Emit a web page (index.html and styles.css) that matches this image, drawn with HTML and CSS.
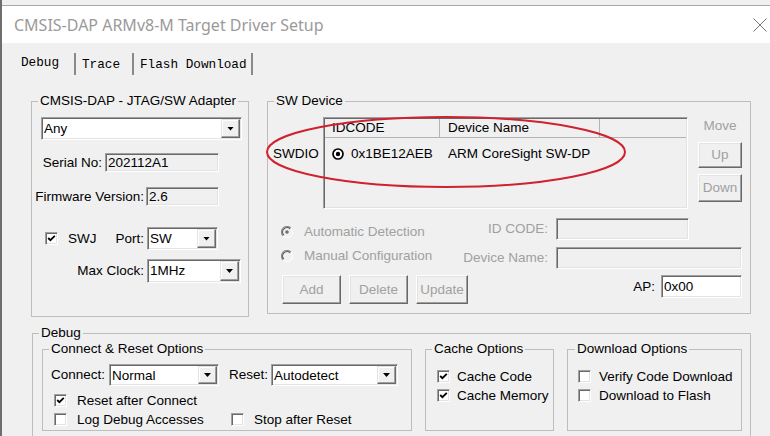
FILE: index.html
```html
<!DOCTYPE html>
<html>
<head>
<meta charset="utf-8">
<title>CMSIS-DAP ARMv8-M Target Driver Setup</title>
<link rel="stylesheet" href="styles.css">
</head>
<body>
<div class="window">
  <div class="topstrip"></div>
  <div class="titlebar">
    <span class="title">CMSIS-DAP ARMv8-M Target Driver Setup</span>
    <svg class="close" viewBox="0 0 14 14"><path d="M0.5 0.5L13.5 13.5M13.5 0.5L0.5 13.5"/></svg>
  </div>
  <div class="tabs">
    <div class="tab t1 sel">Debug</div>
    <div class="tab t2">Trace</div>
    <div class="tab t3">Flash Download</div>
  </div>
  <div class="row1">
    <fieldset class="group g-adapter">
      <legend>CMSIS-DAP - JTAG/SW Adapter</legend>
      <div class="adapter">
        <div class="combo sunk c-any"><span class="val">Any</span><span class="drop"></span></div>
        <div class="frow r-serial"><span class="lbl l-serial">Serial No:</span><span class="field sunk ro f-serial">202112A1</span></div>
        <div class="frow r-fw"><span class="lbl l-fw">Firmware Version:</span><span class="field sunk ro f-fw">2.6</span></div>
        <div class="frow r-swj">
          <span class="swjcell"><span class="cb sunk"><svg viewBox="0 0 9 9"><polyline points="1.2,4 3.4,6.2 7.8,1.8"/></svg></span><span class="swj">SWJ</span><span class="port">Port:</span></span>
          <div class="combo sunk c-port"><span class="val">SW</span><span class="drop"></span></div>
        </div>
        <div class="frow r-clk"><span class="lbl l-clk">Max Clock:</span><div class="combo sunk c-clk"><span class="val">1MHz</span><span class="drop"></span></div></div>
      </div>
    </fieldset>
    <fieldset class="group g-swdev">
      <legend>SW Device</legend>
      <div class="swdev">
        <div class="rowa">
          <span class="swdio">SWDIO</span>
          <div class="list sunk">
            <div class="lhead"><span class="hc hc1">IDCODE</span><span class="hc hc2">Device Name</span><span class="hc hc3"></span></div>
            <div class="lrow">
              <span class="lc1"><svg class="rsel" viewBox="0 0 12 12"><circle cx="6" cy="6" r="5" class="ring"/><circle cx="6" cy="6" r="2.2" class="dot"/></svg>0x1BE12AEB</span>
              <span class="lc2">ARM CoreSight SW-DP</span>
            </div>
          </div>
          <div class="move">
            <div class="movelbl">Move</div>
            <div class="btn dis b-up">Up</div>
            <div class="btn dis b-down">Down</div>
          </div>
        </div>
        <div class="rowb">
          <div class="radios">
            <div class="ropt"><svg class="rdis" viewBox="0 0 12 12"><circle cx="6" cy="6" r="5" class="rbg"/><path class="ro1" d="M9.89 2.11A5.5 5.5 0 0 0 2.11 9.89"/><path class="ri1" d="M9.18 2.82A4.5 4.5 0 0 0 2.82 9.18"/><path class="ro2" d="M9.89 2.11A5.5 5.5 0 0 1 2.11 9.89"/><circle cx="6" cy="6" r="1.8" class="rdot"/></svg>Automatic Detection</div>
            <div class="ropt"><svg class="rdis" viewBox="0 0 12 12"><circle cx="6" cy="6" r="5" class="rbg"/><path class="ro1" d="M9.89 2.11A5.5 5.5 0 0 0 2.11 9.89"/><path class="ri1" d="M9.18 2.82A4.5 4.5 0 0 0 2.82 9.18"/><path class="ro2" d="M9.89 2.11A5.5 5.5 0 0 1 2.11 9.89"/></svg>Manual Configuration</div>
          </div>
          <div class="idgrid">
            <span class="glbl">ID CODE:</span><span class="field sunk ro f-id"></span>
            <span class="glbl">Device Name:</span><span class="field sunk ro f-dn"></span>
          </div>
        </div>
        <div class="rowc">
          <div class="btn dis b-add">Add</div>
          <div class="btn dis b-del">Delete</div>
          <div class="btn dis b-upd">Update</div>
          <div class="ap"><span>AP:</span><span class="field sunk f-ap">0x00</span></div>
        </div>
      </div>
    </fieldset>
  </div>
  <fieldset class="group g-debug">
    <legend>Debug</legend>
    <div class="dbg">
      <fieldset class="group g-conn">
        <legend>Connect &amp; Reset Options</legend>
        <div class="conn">
          <div class="crow">
            <span class="l-conn">Connect:</span>
            <div class="combo sunk c-conn"><span class="val">Normal</span><span class="drop"></span></div>
            <span class="l-reset">Reset:</span>
            <div class="combo sunk c-reset"><span class="val">Autodetect</span><span class="drop"></span></div>
          </div>
          <div class="cbrow first"><span class="cb sunk"><svg viewBox="0 0 9 9"><polyline points="1.2,4 3.4,6.2 7.8,1.8"/></svg></span><span class="cbl">Reset after Connect</span></div>
          <div class="cbrow">
            <span class="cbitem cb-log"><span class="cb sunk"></span><span class="cbl">Log Debug Accesses</span></span>
            <span class="cbitem"><span class="cb sunk"></span><span class="cbl">Stop after Reset</span></span>
          </div>
        </div>
      </fieldset>
      <fieldset class="group g-cache">
        <legend>Cache Options</legend>
        <div class="cache">
          <div class="cbrow"><span class="cb sunk"><svg viewBox="0 0 9 9"><polyline points="1.2,4 3.4,6.2 7.8,1.8"/></svg></span><span class="cbl">Cache Code</span></div>
          <div class="cbrow"><span class="cb sunk"><svg viewBox="0 0 9 9"><polyline points="1.2,4 3.4,6.2 7.8,1.8"/></svg></span><span class="cbl">Cache Memory</span></div>
        </div>
      </fieldset>
      <fieldset class="group g-dl">
        <legend>Download Options</legend>
        <div class="dl">
          <div class="cbrow"><span class="cb sunk"></span><span class="cbl">Verify Code Download</span></div>
          <div class="cbrow"><span class="cb sunk"></span><span class="cbl">Download to Flash</span></div>
        </div>
      </fieldset>
    </div>
  </fieldset>
  <svg class="mark" viewBox="0 0 770 436"><ellipse cx="446" cy="152" rx="179" ry="35"/></svg>
</div>
</body>
</html>
```
FILE: styles.css
```css
* { box-sizing: border-box; }
html, body { margin: 0; padding: 0; }
body {
  width: 770px; height: 436px; overflow: hidden;
  background: #f0f0f0;
  font-family: "Liberation Sans", Arial, sans-serif;
  font-size: 13.5px; line-height: 16px; color: #000;
}
.window { position: relative; height: 436px; border-left: 2px solid #6e6e6e; }
.topstrip { height: 6px; background: #f0f0f0; border-bottom: 1px solid #a8a8a8; }
.titlebar {
  height: 37px; background: #fff;
  display: flex; align-items: center; justify-content: space-between;
  padding: 0 3px 0 12px;
}
.title { font-family: "Noto Sans", "Open Sans", sans-serif; font-size: 16px; color: #9a9a9a; }
.close { width: 14px; height: 14px; display: block; }
.close path { stroke: #777; stroke-width: 1; fill: none; }

/* tabs */
.tabs {
  display: flex; height: 22px; margin: 10px 0 0 12px;
  font-family: "Liberation Mono", monospace; font-size: 12.7px;
}
.tab { height: 22px; line-height: 20px; padding-top: 2px; border-right: 2px solid #8a8a8a; white-space: nowrap; }
.tab.sel { padding-top: 0; }
.t1 { width: 62px; padding-left: 7px; }
.t2 { width: 58px; padding-left: 6px; }
.t3 { width: 119px; padding-left: 6px; }

/* group boxes */
.group { margin: 0; padding: 0; border: 1px solid #bdbdbd; min-width: 0; }
.group > legend { padding: 0 2px; margin-left: 6px; line-height: 16px; }
.row1 { display: flex; align-items: flex-start; gap: 18px; margin: 18px 0 0 29px; }
.g-adapter { width: 218px; height: 224px; }
.g-swdev { width: 484px; height: 221px; }
.g-debug { width: 719px; height: 130px; margin: 8px 0 0 30px; }

/* 3d borders */
.sunk {
  border: 1px solid; border-color: #a0a0a0 #fff #fff #a0a0a0;
  box-shadow: inset 1px 1px #696969, inset -1px -1px #e3e3e3;
}
.btn {
  border: 1px solid; border-color: #fff #696969 #696969 #fff;
  box-shadow: inset -1px -1px #a0a0a0, inset 1px 1px #e3e3e3;
  background: #f0f0f0;
  display: flex; align-items: center; justify-content: center;
}
.dis { color: #a0a0a0; }

/* combo */
.combo { display: flex; background: #fff; padding: 1px; }
.combo .val { flex: 1; padding-left: 1px; line-height: 19px; white-space: nowrap; overflow: hidden; }
.drop {
  width: 19px; flex: none;
  border: 1px solid; border-color: #e3e3e3 #696969 #696969 #e3e3e3;
  box-shadow: inset -1px -1px #a0a0a0, inset 1px 1px #fff;
  background: #f0f0f0;
  display: flex; align-items: center; justify-content: center;
}
.drop::after { content: ""; width: 7px; height: 4px; background: #000; clip-path: polygon(0 0, 100% 0, 50% 100%); }

.field { display: flex; align-items: center; padding-left: 2px; background: #fff; white-space: nowrap; }
.field.ro { background: #f0f0f0; }

.cb { width: 13px; height: 13px; flex: none; background: #fff; display: flex; align-items: center; justify-content: center; }
.cb svg { width: 9px; height: 9px; display: block; }
.cb polyline { fill: none; stroke: #000; stroke-width: 1.8; }

/* adapter group */
.adapter { padding-top: 8px; }
.c-any { margin-left: 9px; width: 201px; height: 23px; }
.frow { display: flex; align-items: center; }
.lbl { text-align: right; white-space: nowrap; }
.r-serial { margin-top: 13px; height: 19px; }
.l-serial { width: 70px; }
.f-serial { margin-left: 3px; width: 114px; height: 19px; }
.r-fw { margin-top: 15px; height: 19px; }
.l-fw { width: 112px; }
.f-fw { margin-left: 2px; width: 73px; height: 19px; }
.r-swj { margin-top: 21px; height: 23px; }
.swjcell { width: 115px; display: flex; align-items: center; padding: 0 3px 0 13px; }
.swj { margin-left: 10px; }
.port { margin-left: auto; }
.c-port { width: 71px; height: 23px; }
.r-clk { margin-top: 9px; height: 24px; }
.l-clk { width: 115px; padding-right: 3px; }
.c-clk { width: 94px; height: 24px; }

/* sw device group */
.swdev { padding-top: 8px; }
.rowa { display: flex; height: 92px; }
.swdio { width: 55px; padding: 29px 0 0 5px; }
.list { width: 365px; height: 92px; padding: 1px; background: #f0f0f0; }
.lhead { display: flex; height: 19px; border-bottom: 1px solid #b4b4b4; }
.hc { line-height: 18px; padding-left: 7px; white-space: nowrap; }
.hc1 { width: 115px; border-right: 1px solid #b4b4b4; }
.hc2 { width: 160px; border-right: 1px solid #b4b4b4; padding-left: 8px; }
.hc3 { flex: 1; }
.lrow { display: flex; margin-top: 8px; line-height: 16px; }
.lc1 { width: 115px; padding-left: 7px; display: flex; align-items: center; white-space: nowrap; }
.lc2 { padding-left: 8px; white-space: nowrap; }
.rsel { width: 12px; height: 12px; margin-right: 7px; flex: none; }
.rsel .ring { fill: #fff; stroke: #000; stroke-width: 1.7; }
.rsel .dot { fill: #000; }
.move { margin-left: 10px; width: 44px; display: flex; flex-direction: column; }
.movelbl { text-align: center; color: #a0a0a0; margin-top: 1px; }
.b-up { height: 26px; margin-top: 8px; }
.b-down { height: 28px; margin-top: 6px; }

.rowb { display: flex; margin-top: 9px; }
.radios { padding-left: 13px; }
.ropt { display: flex; align-items: center; height: 16px; color: #a0a0a0; white-space: nowrap; }
.ropt:first-child { margin-top: 6px; }
.ropt + .ropt { margin-top: 8px; }
.rdis { width: 12px; height: 12px; margin-right: 11px; flex: none; }
.rdis .rbg { fill: #f0f0f0; }
.rdis .ro1 { fill: none; stroke: #8a8a8a; stroke-width: 1.2; }
.rdis .ri1 { fill: none; stroke: #5a5a5a; stroke-width: 1.2; }
.rdis .ro2 { fill: none; stroke: #fff; stroke-width: 1; }
.rdis .rdot { fill: #6e6e6e; }
.idgrid {
  margin-left: auto; margin-right: 8px;
  display: grid; grid-template-columns: auto 186px; column-gap: 8px; row-gap: 7px; align-items: center;
}
.glbl { text-align: right; color: #a0a0a0; white-space: nowrap; }
.f-id { width: 133px; height: 22px; }
.f-dn { width: 186px; height: 22px; }

.rowc { display: flex; align-items: flex-start; margin-top: 6px; padding-left: 14px; }
.b-add { width: 59px; height: 29px; }
.b-del { width: 59px; height: 29px; margin-left: 8px; }
.b-upd { width: 52px; height: 29px; margin-left: 8px; }
.ap { margin-left: auto; margin-right: 8px; display: flex; align-items: center; }
.f-ap { width: 81px; height: 23px; margin-left: 6px; }

/* debug group */
.dbg { display: flex; gap: 13px; padding-left: 9px; }
.g-conn { width: 370px; height: 90px; }
.g-cache { width: 129px; height: 90px; }
.g-dl { width: 175px; height: 90px; }
.g-dl > legend { margin-left: 7px; }
.conn { padding: 7px 0 0 8px; }
.crow { display: flex; align-items: center; height: 22px; }
.l-conn { width: 58px; }
.c-conn { width: 110px; height: 22px; }
.l-reset { width: 42px; margin-left: 10px; }
.c-reset { width: 127px; height: 22px; }
.cbrow { display: flex; align-items: center; height: 19px; white-space: nowrap; }
.conn .cbrow { padding-left: 3px; }
.conn .cbrow.first { margin-top: 5px; }
.cbitem { display: flex; align-items: center; }
.cb-log { width: 177px; }
.conn .cbl { margin-left: 10px; }
.cache { padding: 10px 0 0 11px; }
.cache .cbl { margin-left: 7px; }
.dl { padding: 10px 0 0 10px; }
.dl .cbl { margin-left: 8px; }

/* annotation overlay */
.mark { position: absolute; left: -2px; top: 0; width: 770px; height: 436px; pointer-events: none; }
.mark ellipse { fill: none; stroke: #d0212e; stroke-width: 2; }
```
